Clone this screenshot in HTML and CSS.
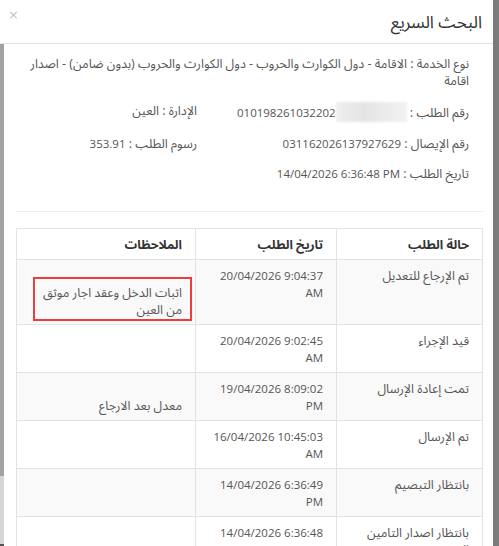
FILE: index.html
```html
<!DOCTYPE html>
<html lang="ar" dir="rtl">

<head>
  <meta charset="UTF-8" />
  <meta name="viewport" content="width=device-width, initial-scale=1.0" />
  <title>البحث السريع</title>
  <link rel="stylesheet" href="styles.css">
</head>

<body>

  <div class="modal">
    <div class="modal-header">
      <h4 class="modal-title">البحث السريع</h4>
      <button class="close">×</button>
    </div>

    <div class="modal-body">
      <div class="info">
        <p>نوع الخدمة : الاقامة - دول الكوارث والحروب - دول الكوارث والحروب (بدون ضامن) - اصدار اقامة</p>
        <div class="info-row">
          <p>رقم الطلب : <bdi dir="ltr">010198261032202<span class="blurred"></span></bdi></p>
          <p>الإدارة : العين</p>
        </div>
        <div class="info-row">
          <p>رقم الإيصال : <bdi dir="ltr">031162026137927629</bdi></p>
          <p>رسوم الطلب : <bdi dir="ltr">353.91</bdi></p>
        </div>
        <p>تاريخ الطلب : <bdi dir="ltr">14/04/2026 6:36:48 PM</bdi></p>
      </div>

      <hr>

      <table class="status-table">
        <thead>
          <tr>
            <th class="col-status">حالة الطلب</th>
            <th class="col-date">تاريخ الطلب</th>
            <th>الملاحظات</th>
          </tr>
        </thead>
        <tbody>
          <tr>
            <td>تم الإرجاع للتعديل</td>
            <td class="date"><bdi dir="ltr">20/04/2026 9:04:37 AM</bdi></td>
            <td class="note"><br>اثبات الدخل وعقد اجار موثق<br>من العين<span class="mark"></span></td>
          </tr>
          <tr>
            <td>قيد الإجراء</td>
            <td class="date"><bdi dir="ltr">20/04/2026 9:02:45 AM</bdi></td>
            <td></td>
          </tr>
          <tr>
            <td>تمت إعادة الإرسال</td>
            <td class="date"><bdi dir="ltr">19/04/2026 8:09:02 PM</bdi></td>
            <td><br>معدل بعد الارجاع</td>
          </tr>
          <tr>
            <td>تم الإرسال</td>
            <td class="date"><bdi dir="ltr">16/04/2026 10:45:03 AM</bdi></td>
            <td></td>
          </tr>
          <tr>
            <td>بانتظار التبصيم</td>
            <td class="date"><bdi dir="ltr">14/04/2026 6:36:49 PM</bdi></td>
            <td></td>
          </tr>
          <tr>
            <td>بانتظار اصدار التامين الصحي</td>
            <td class="date"><bdi dir="ltr">14/04/2026 6:36:48 PM</bdi></td>
            <td></td>
          </tr>
        </tbody>
      </table>
    </div>
  </div>

</body>

</html>
```

FILE: styles.css
```css
body {
  font-family: 'Open Sans', 'Noto Sans Arabic', 'DejaVu Sans', sans-serif;
  font-size: 12.5px;
  line-height: 17px;
  color: #555;
  background: #7b7b7b;
  margin: 0;
  padding: 0;
  overflow: hidden;
  height: 546px;
}

bdi {
  font-size: 11.5px;
}

.modal {
  width: 493px;
  height: 546px;
  margin: 0 auto 0 0;
  background: #fff;
  overflow: hidden;
}

.modal-header {
  display: flex;
  justify-content: space-between;
  align-items: center;
  height: 43px;
  padding: 0 11px 0 8px;
  border-bottom: 1px solid #e5e5e5;
}

.modal-title {
  margin: 0;
  font-size: 17px;
  font-weight: normal;
  color: #333;
  line-height: 24px;
}

.close {
  background: none;
  border: none;
  padding: 0;
  margin-top: -14px;
  font-family: 'DejaVu Sans', sans-serif;
  font-size: 13px;
  color: #c4c4c4;
  cursor: pointer;
}

.modal-body {
  border-left: 4px solid #a3a3a3;
  border-image: linear-gradient(#a3a3a3 431px, #d6d6d6 431px, #d6d6d6 499px, #555 499px) 1;
  padding: 0 10px 0 12px;
  height: 502px;
}

.info {
  padding: 11px 14px 0 0;
}

.info p {
  margin: 0 0 13px;
}

.info-row {
  display: grid;
  grid-template-columns: 272px 1fr;
}

.blurred {
  display: inline-block;
  width: 71px;
  height: 20px;
  vertical-align: -5px;
  background: linear-gradient(90deg, #efefef, #e4e4e4 40%, #ececec 70%, #f2f2f2);
  filter: blur(1px);
}

hr {
  border: none;
  border-top: 1px solid #eee;
  margin: 29px 0 16px;
}

.status-table {
  width: 100%;
  border-collapse: collapse;
  table-layout: fixed;
}

.status-table th,
.status-table td {
  border: 1px solid #e3e3e3;
  padding: 7px 13px 6px;
  text-align: right;
  vertical-align: top;
}

.status-table th {
  font-weight: bold;
  color: #333;
}

.col-status {
  width: 119px;
}

.col-date {
  width: 114px;
}

.status-table tbody tr:nth-child(odd) {
  background: #f9f9f9;
}

.note {
  position: relative;
}

.mark {
  position: absolute;
  top: 17px;
  bottom: 3px;
  left: 16px;
  right: 3px;
  border: 2px solid #ee3d3d;
}
```
